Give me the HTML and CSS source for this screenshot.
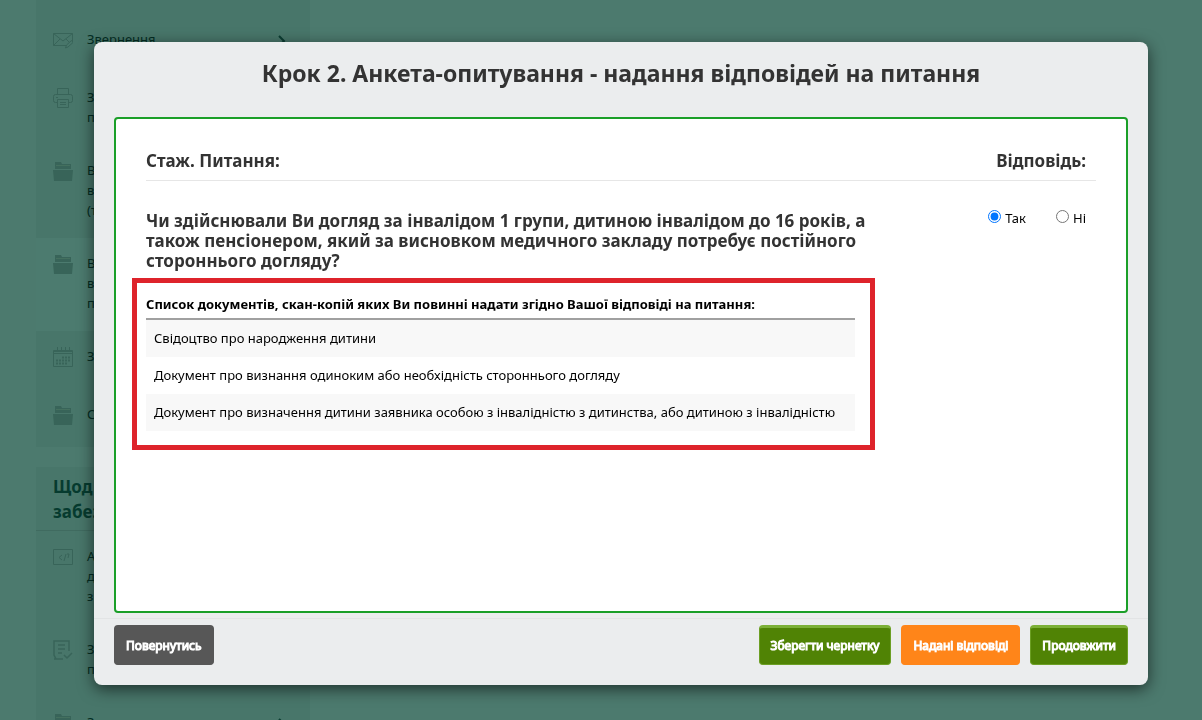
FILE: index.html
```html
<!DOCTYPE html>
<html lang="uk">
<head>
<meta charset="utf-8">
<meta name="viewport" content="width=device-width, initial-scale=1">
<title>Анкета-опитування</title>
<link rel="stylesheet" href="styles.css">
</head>
<body>
<svg class="sprite" aria-hidden="true">
  <symbol id="mail" viewBox="0 0 20 20"><path d="M13 15.500H.500V3.500h19V12M.500 3.500 10 11l9.500-7.500M.500 15.500 7 9M13 9l3 3M12.500 18l1-3 5-4.500 1.500 2-5 4.500z"/></symbol>
  <symbol id="printer" viewBox="0 0 20 20"><path d="M4 14.500H2.500a2 2 0 0 1-2-2v-4a2 2 0 0 1 2-2h15a2 2 0 0 1 2 2v4a2 2 0 0 1-2 2H16M4.500 6.500v-6h11v6M4.500 11.500h11v8h-11zM7 14.500h6M7 16.500h6M3 9.500h2"/></symbol>
  <symbol id="folder" viewBox="0 0 20 20"><path class="solid" d="M2 8V1h6l1 2h9v5zM0 9h20l-1 11H1z"/><path class="slit" d="M3 4.500h14"/></symbol>
  <symbol id="calendar" viewBox="0 0 20 20"><path d="M.500 3.500h19v16H.500zM.500 6.500h19M.500 4.500h19M4.500 0v5M8.500 0v5M12.500 0v5M16.500 0v5"/><path class="dots" d="M9 10.500h9M3 13.500h15M3 16.500h12"/></symbol>
  <symbol id="code" viewBox="0 0 20 20"><path d="M.500 2.500h19v15H.500zM9 8l-3 2.500L9 13M13 7l-2 7M14 7h2l-1 4"/></symbol>
  <symbol id="form" viewBox="0 0 20 20"><path class="medium" d="M16 11V1H1v14l2 4h7M1 19h6M5 5h7M5 9h7M5 13h4M11 15l3 3 5-5"/></symbol>
  <symbol id="chevron" viewBox="0 0 8 12"><path class="thick" d="M1 1l5 5-5 5"/></symbol>
</svg>

<aside class="sidebar">
  <nav class="menu menu-first">
    <a class="item" href="#"><svg class="icon"><use href="#mail"/></svg><span>Звернення</span><svg class="chevron"><use href="#chevron"/></svg></a>
    <a class="item" href="#"><svg class="icon"><use href="#printer"/></svg><span>З<br>п</span></a>
    <a class="item" href="#"><svg class="icon"><use href="#folder"/></svg><span>В<br>в<br>(т</span></a>
    <a class="item item-active" href="#"><svg class="icon"><use href="#folder"/></svg><span>В<br>в<br>п</span></a>
    <a class="item" href="#"><svg class="icon"><use href="#calendar"/></svg><span>З</span></a>
    <a class="item" href="#"><svg class="icon"><use href="#folder"/></svg><span>С</span></a>
  </nav>
  <nav class="menu">
    <h2 class="menu-title">Щод<br>забез</h2>
    <a class="item" href="#"><svg class="icon"><use href="#code"/></svg><span>А<br>д<br>з</span></a>
    <a class="item" href="#"><svg class="icon"><use href="#form"/></svg><span>З<br>п</span></a>
    <a class="item" href="#"><svg class="icon"><use href="#folder"/></svg><span>З</span><svg class="chevron"><use href="#chevron"/></svg></a>
  </nav>
</aside>

<section class="modal" role="dialog" aria-labelledby="modal-title">
  <h1 class="modal-title" id="modal-title">Крок 2. Анкета-опитування - надання відповідей на питання</h1>
  <div class="panel">
    <header class="panel-head">
      <h2 class="label">Стаж. Питання:</h2>
      <h2 class="label">Відповідь:</h2>
    </header>
    <div class="question-row">
      <h3 class="question" id="question">Чи здійснювали Ви догляд за інвалідом 1 групи, дитиною інвалідом до 16 років, а також пенсіонером, який за висновком медичного закладу потребує постійного стороннього догляду?</h3>
      <div class="answers" role="radiogroup" aria-labelledby="question">
        <label class="answer"><input type="radio" name="care" checked>Так</label>
        <label class="answer"><input type="radio" name="care">Ні</label>
      </div>
    </div>
    <div class="documents">
      <table class="doc-table">
        <thead><tr><th scope="col">Список документів, скан-копій яких Ви повинні надати згідно Вашої відповіді на питання:</th></tr></thead>
        <tbody>
          <tr><td>Свідоцтво про народження дитини</td></tr>
          <tr><td>Документ про визнання одиноким або необхідність стороннього догляду</td></tr>
          <tr><td>Документ про визначення дитини заявника особою з інвалідністю з дитинства, або дитиною з інвалідністю</td></tr>
        </tbody>
      </table>
    </div>
  </div>
  <footer class="actions">
    <button class="btn btn-back" type="button">Повернутись</button>
    <button class="btn btn-green" type="button">Зберегти чернетку</button>
    <button class="btn btn-orange" type="button">Надані відповіді</button>
    <button class="btn btn-green" type="button">Продовжити</button>
  </footer>
</section>
</body>
</html>
```
FILE: styles.css
```css
* { box-sizing: border-box; }

body {
  margin: 0;
  height: 100vh;
  overflow: hidden;
  background: #4c7a6e;
  font: 13px/20px "Noto Sans", "Open Sans", sans-serif;
  color: #000;
}

h1, h2, h3 { margin: 0; font-family: "Noto Sans", "Open Sans", sans-serif; font-weight: 700; }

.sprite { position: absolute; width: 0; height: 0; }

/* Sidebar behind the dialog */
.sidebar {
  width: 274px;
  margin-left: 36px;
  display: flex;
  flex-direction: column;
  gap: 20px;
}
.menu { background: #48766a; }
.menu-first { padding-top: 14px; }
.menu-title {
  padding: 7px 17px 6px;
  border-bottom: 1px solid #406b60;
  font-size: 17px;
  line-height: 25px;
  color: #063b2f;
}
.item {
  display: flex;
  gap: 14px;
  min-height: 58px;
  padding: 15px 24px 18px 17px;
  color: #032d23;
  text-decoration: none;
}
.item-active { background: #4c7b6f; }
.icon {
  flex: none;
  width: 20px;
  height: 20px;
  margin-top: 1px;
  fill: none;
  stroke: #386459;
}
.solid { fill: #386459; stroke: none; }
.slit { stroke: #44705f; }
.dots { stroke-width: 2; stroke-dasharray: 2 1; }
.medium { stroke-width: 1.5; }
.thick { stroke-width: 2; }
.chevron {
  width: 8px;
  height: 12px;
  margin: 6px 0 0 auto;
  fill: none;
  stroke: #0b3d32;
}

/* Dialog */
.modal {
  position: fixed;
  inset: 42px 54px 35px 94px;
  display: flex;
  flex-direction: column;
  border-radius: 8px;
  background: #ebedee;
  box-shadow: 0 4px 16px rgba(0, 0, 0, 0.6);
}
.modal-title {
  padding: 15px 20px 28px;
  font-size: 23px;
  line-height: 32px;
  text-align: center;
  color: #333;
}
.panel {
  flex: 1;
  margin: 0 20px;
  padding: 30px;
  border: 2px solid #1a9f28;
  border-radius: 4px;
  background: #fff;
}
.panel-head {
  display: flex;
  justify-content: space-between;
  padding: 2px 10px 9px 0;
  border-bottom: 1px solid #e6e6e6;
}
.label, .question { font-size: 17px; line-height: 20px; color: #333; }
.question-row {
  display: flex;
  justify-content: space-between;
  padding: 30px 10px 7px 0;
}
.question { flex: 0 1 750px; }
.answers { display: flex; gap: 30px; }
.answer { display: flex; gap: 4px; height: 14px; line-height: 14px; }
.answer input { margin: -1px 0 0; width: 13px; height: 13px; accent-color: #0075ff; }

.documents {
  width: 743px;
  max-width: 100%;
  margin-left: -14px;
  padding: 9px 15px 14px 9px;
  border: 5px solid #de232b;
}
.doc-table { width: 100%; border-collapse: collapse; }
.doc-table th {
  padding: 2px 0 4px;
  border-bottom: 2px solid #a0a0a0;
  text-align: left;
}
.doc-table td { padding: 8px 8px 9px; }
.doc-table tbody tr:nth-child(odd) { background: #f8f8f8; }

.actions {
  display: flex;
  gap: 10px;
  margin-top: 5px;
  padding: 6px 20px 20px;
  border-top: 1px solid #e2e4e5;
}
.btn {
  height: 40px;
  padding: 0 11px;
  border: 1px solid;
  border-top-width: 3px;
  border-radius: 4px;
  font: 12px/20px "Noto Sans", "Open Sans", sans-serif;
  -webkit-text-stroke: 1px #fff;
  color: #fff;
}
.btn-back { margin-right: auto; background: #575757; border-color: #575757; }
.btn-green { background: #508305; border-color: #7cb037 #6c9f24 #6c9f24; }
.btn-orange { background: #ff8519; border-color: #ff8519; }
```
